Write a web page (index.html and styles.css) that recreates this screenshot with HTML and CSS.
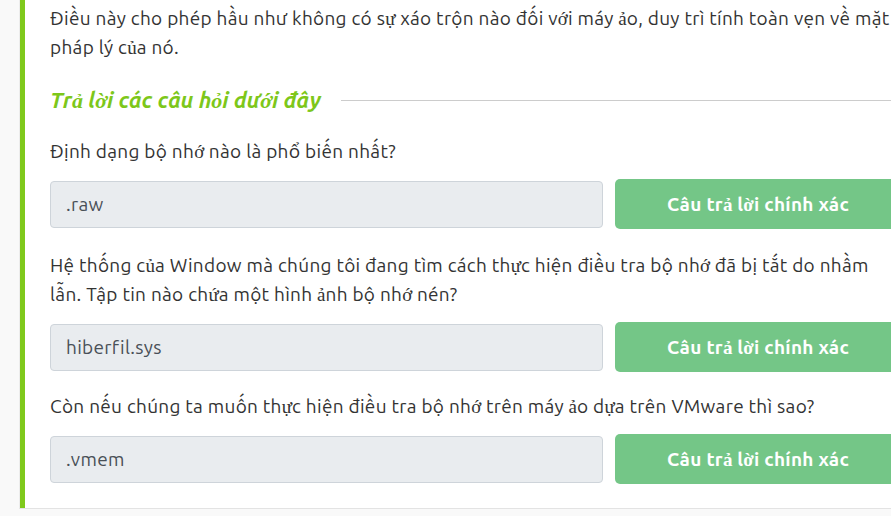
FILE: index.html
```html
<!DOCTYPE html>
<html lang="vi">
<head>
<meta charset="utf-8">
<title>Trả lời các câu hỏi</title>
<link rel="stylesheet" href="styles.css">
</head>
<body>
<div class="card">
  <p class="intro">Điều này cho phép hầu như không có s<span class="fb">ự</span> xáo trộn nào đối v<span class="fb">ớ</span>i máy <span class="fb">ả</span>o, duy trì tính toàn vẹn về mặt pháp lý c<span class="fb">ủ</span>a nó.</p>

  <div class="section-title">
    <h3>Tr<span class="fb">ả</span> l<span class="fb">ờ</span>i các câu h<span class="fb">ỏ</span>i dư<span class="fb">ớ</span>i đây</h3>
    <span class="rule"></span>
  </div>

  <div class="question">
    <p class="q">Định dạng bộ nh<span class="fb">ớ</span> nào là phổ biến nhất?</p>
    <div class="answer-row">
      <div class="answer">.raw</div>
      <button class="btn">Câu tr<span class="fb">ả</span> l<span class="fb">ờ</span>i chính xác</button>
    </div>
  </div>

  <div class="question">
    <p class="q">Hệ thống c<span class="fb">ủ</span>a Window mà chúng tôi đang tìm cách th<span class="fb">ự</span>c hiện điều tra bộ nh<span class="fb">ớ</span> đã bị tắt do nhầm lẫn. Tập tin nào ch<span class="fb">ứ</span>a một hình <span class="fb">ả</span>nh bộ nh<span class="fb">ớ</span> nén?</p>
    <div class="answer-row">
      <div class="answer">hiberfil.sys</div>
      <button class="btn">Câu tr<span class="fb">ả</span> l<span class="fb">ờ</span>i chính xác</button>
    </div>
  </div>

  <div class="question">
    <p class="q">Còn nếu chúng ta muốn th<span class="fb">ự</span>c hiện điều tra bộ nh<span class="fb">ớ</span> trên máy <span class="fb">ả</span>o d<span class="fb">ự</span>a trên VMware thì sao?</p>
    <div class="answer-row">
      <div class="answer">.vmem</div>
      <button class="btn">Câu tr<span class="fb">ả</span> l<span class="fb">ờ</span>i chính xác</button>
    </div>
  </div>
</div>
</body>
</html>
```
FILE: styles.css
```css
html, body {
  margin: 0;
  padding: 0;
  overflow: hidden;
}
body {
  background: #f9f9f9;
  font-family: "Ubuntu", "Open Sans", "Noto Sans", sans-serif;
  font-size: 19px;
  letter-spacing: 0.3px;
  color: #333333;
}
.fb {
  font-family: "Liberation Serif", serif;
  letter-spacing: 0;
}
.card {
  margin-left: 19px;
  width: 920px;
  background: #ffffff;
  border-left: 1px solid #ececec;
  border-bottom: 1px solid #e3e3e3;
  padding: 4px 0 24px 0;
  position: relative;
}
.card::before {
  content: "";
  position: absolute;
  left: 0;
  top: 0;
  bottom: 0;
  width: 5px;
  background: #7fc91c;
}
.card > * {
  margin-left: 30px;
  width: 851px;
}
.intro {
  margin-top: 0;
  margin-bottom: 0;
  line-height: 29px;
}
.section-title {
  display: flex;
  align-items: center;
  gap: 20px;
  margin-top: 24px;
  height: 28px;
}
.section-title h3 {
  margin: 0;
  font-size: 22px;
  font-weight: 700;
  font-style: italic;
  letter-spacing: 0;
  color: #7dc71a;
  white-space: nowrap;
  line-height: 28px;
}
.rule {
  flex: 1;
  height: 1px;
  background: #cccccc;
}
.question {
  margin-top: 23px;
}
.question + .question {
  margin-top: 22px;
}
.question:last-child {
  margin-top: 20px;
}
.q {
  margin: 0 0 13px 0;
  line-height: 28px;
}
.answer-row {
  display: grid;
  grid-template-columns: 553px 286px;
  column-gap: 12px;
  align-items: center;
}
.answer {
  box-sizing: border-box;
  height: 47px;
  background: #e9ecef;
  border: 1px solid #ced4da;
  border-radius: 4px;
  padding: 0 15px;
  display: flex;
  align-items: center;
  color: #495057;
}
.btn {
  height: 50px;
  border: none;
  border-radius: 5px;
  background: #74c687;
  color: #ffffff;
  font-family: inherit;
  font-size: 19px;
  letter-spacing: 0.3px;
  font-weight: 600;
  padding: 0 12px;
}
```
